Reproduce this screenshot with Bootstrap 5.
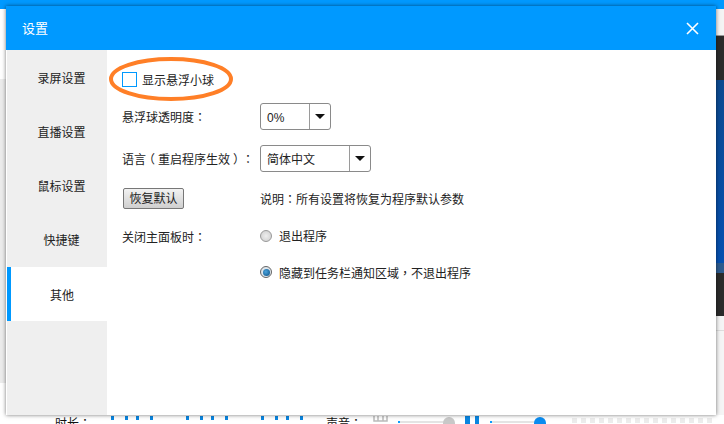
<!DOCTYPE html>
<html lang="zh-Hans">
<head>
<meta charset="utf-8">
<title>设置</title>
<link href="https://cdn.jsdelivr.net/npm/bootstrap@5.3.0/dist/css/bootstrap.min.css" rel="stylesheet">
<style>
html,body{margin:0;width:724px;height:424px;overflow:hidden;background:#fff;}
body{font-family:"Liberation Sans","Noto Sans CJK SC",sans-serif;font-size:12px;color:#222;position:relative;}
.pn{font-family:"Noto Sans CJK TC",sans-serif;font-feature-settings:"locl" 0;}
.pr{font-family:"Noto Sans CJK TC",sans-serif;font-feature-settings:"locl" 0,"halt" 1;margin:0 3px;display:inline-block;}
.bg-top{height:9px;background:#0099ff;}
.bg-side{height:406px;}
.bg-stack{width:8px;height:406px;margin-left:auto;display:flex;flex-direction:column;}
.s-white{height:26px;background:#f4f4f4;}
.s-line{height:1px;background:#999;}
.s-dark{height:44px;background:#2b2b2b;}
.s-blue{height:183px;background:linear-gradient(#0c4a90,#0650b0);}
.s-blue2{height:10px;background:#2d5b8e;}
.s-dark2{height:43px;background:#2b2b2b;}
.s-rest{height:15px;background:#f5f5f5;border-bottom:1px solid #ddd;}
.s-rest2{flex:1;background:#f5f5f5;}
.left-fill{position:absolute;left:0;top:79px;width:6px;height:304px;background:#ececec;}
.dlg{position:absolute;left:6px;top:6px;width:710px;height:409px;background:#fff;box-shadow:0 0 4px rgba(0,0,0,.55);}
.dlg-head{height:44px;background:#0099ff;color:#fff;font-size:13px;padding:2px 17px 0 16px;}
.x-ico{width:13px;height:13px;display:block;margin-top:-2px;}
.dlg-body{height:365px;}
.side{width:100px;background:#efefef;margin-left:1px;padding-top:1px;}
.side-item{height:54px;color:#222;font-size:12px;padding:2px 0 0 9px;}
.side-item.on{background:#fff;border-left:4px solid #0099ff;padding:4px 0 0 6px;}
.main-pane{padding:17px 0 0 15px;}
.rowline{display:flex;align-items:center;}
.lab{width:138px;flex:none;}
.tx{padding-top:2px;}
.chk{width:15px;height:15px;border:1.5px solid #0099ff;background:#fff;margin-right:5px;flex:none;}
.sel{height:27px;border:1px solid #8a8a8a;border-radius:3px;background:#fff;display:flex;align-items:stretch;color:#222;}
.sel-val{padding:2px 0 0 6px;display:flex;align-items:center;border-right:1px solid #9a9a9a;}
.sel-arrow{width:20px;display:flex;align-items:center;justify-content:center;}
.sel-arrow i{display:block;width:0;height:0;border-left:5px solid transparent;border-right:5px solid transparent;border-top:5px solid #111;}
.w50{width:49px;}.w90{width:89px;}
.oldbtn{width:61px;height:21px;padding:2px 0 0;font-size:12px;line-height:17px;color:#222;border:1px solid #777;border-radius:2px;background:linear-gradient(#f2f2f2,#cfcfcf);margin-left:1px;display:block;}
.oldbtn:hover{color:#222;border-color:#777;}
.rad{width:12px;height:12px;border-radius:50%;border:1px solid #999;background:radial-gradient(circle,#eee,#ccc);margin:0 7px 0 0;flex:none;display:flex;align-items:center;justify-content:center;}
.rad.on{background:#dfe6ec;border-color:#666;}
.rad.on i{display:block;width:7px;height:7px;border-radius:50%;background:radial-gradient(circle at 40% 40%,#4aa3dd,#0b4f83);}
.mt-a{margin-top:11px;}.mt-b{margin-top:15px;}.mt-c{margin-top:16px;}.mt-d{margin-top:19px;}.mt-e{margin-top:20px;}
.h25{height:25px;}.h27{height:27px;}.h21{height:21px;}.h16{height:16px;}
.ring{position:absolute;left:105px;top:53px;width:132px;height:52px;pointer-events:none;}
.footbar{position:absolute;left:0;top:413px;width:724px;height:11px;overflow:hidden;}
.tk{position:absolute;top:3px;width:3px;height:4px;background:#0a86e0;}
.foot-t{position:absolute;top:4px;font-size:12px;line-height:12px;color:#111;}
.knob{position:absolute;top:4px;width:12px;height:12px;border-radius:50%;}
.rail{position:absolute;top:8px;height:2px;background:#e4e4e4;border-left:2px solid #0a9cff;}
.k-g{left:443px;background:#c8c8c8;}.k-b{left:534px;background:#0a8cf0;}
.r-a{left:398px;width:46px;}.r-b{left:490px;width:45px;}
.mic{position:absolute;left:372px;top:3px;width:17px;height:8px;}
.bar1{left:465px;width:5px;height:8px;}.bar2{left:475px;width:4px;height:8px;}
.wm{position:absolute;left:572px;top:5px;width:142px;height:5px;background:repeating-linear-gradient(90deg,#ececec 0 5px,#fff 5px 9px);}
</style>
</head>
<body>
<div class="bg-top"></div>
<div class="bg-side">
  <div class="bg-stack">
    <div class="s-white"></div><div class="s-line"></div><div class="s-dark"></div><div class="s-blue"></div><div class="s-blue2"></div><div class="s-dark2"></div><div class="s-rest"></div><div class="s-rest2"></div>
  </div>
</div>
<div class="left-fill"></div>
<div class="footbar">
  <span class="foot-t" style="left:55px">时长<span class="pn" lang="zh-Hant">：</span></span>
  <span class="tk" style="left:111px"></span><span class="tk" style="left:125px"></span><span class="tk" style="left:136px"></span><span class="tk" style="left:150px"></span>
  <span class="tk" style="left:186px"></span><span class="tk" style="left:200px"></span><span class="tk" style="left:211px"></span><span class="tk" style="left:225px"></span>
  <span class="tk" style="left:261px"></span><span class="tk" style="left:275px"></span><span class="tk" style="left:286px"></span><span class="tk" style="left:300px"></span>
  <span class="foot-t" style="left:326px">声音<span class="pn" lang="zh-Hant">：</span></span>
  <svg class="mic" viewBox="0 0 17 8" aria-hidden="true"><path d="M2 0V5H15V0M6 0V5M11 0V5" fill="none" stroke="#bbb" stroke-width="1.5"/></svg>
  <span class="rail r-a"></span><span class="knob k-g"></span>
  <span class="tk bar1"></span><span class="tk bar2"></span>
  <span class="rail r-b"></span><span class="knob k-b"></span>
  <span class="wm"></span>
</div>

<div class="dlg">
  <div class="dlg-head d-flex align-items-center justify-content-between">
    <span>设置</span>
    <svg class="x-ico" viewBox="0 0 13 13" aria-hidden="true"><path d="M1 1 L12 12 M12 1 L1 12" stroke="#fff" stroke-width="1.6" fill="none"/></svg>
  </div>
  <div class="dlg-body d-flex">
    <div class="side d-flex flex-column">
      <div class="side-item d-flex align-items-center justify-content-center">录屏设置</div>
      <div class="side-item d-flex align-items-center justify-content-center">直播设置</div>
      <div class="side-item d-flex align-items-center justify-content-center">鼠标设置</div>
      <div class="side-item d-flex align-items-center justify-content-center">快捷键</div>
      <div class="side-item on d-flex align-items-center justify-content-center">其他</div>
    </div>
    <div class="main-pane flex-grow-1">
      <div class="rowline h25"><span class="chk"></span><span class="tx">显示悬浮小球</span></div>
      <div class="rowline mt-a h27"><span class="lab tx">悬浮球透明度<span class="pn" lang="zh-Hant">：</span></span><div class="sel"><span class="sel-val w50">0%</span><span class="sel-arrow"><i></i></span></div></div>
      <div class="rowline mt-b h27"><span class="lab tx">语言<span class="pr" lang="zh-Hant">（</span>重启程序生效<span class="pr" lang="zh-Hant">）</span><span class="pn" lang="zh-Hant">：</span></span><div class="sel"><span class="sel-val w90">简体中文</span><span class="sel-arrow"><i></i></span></div></div>
      <div class="rowline mt-c h21"><span class="lab"><button type="button" class="btn oldbtn">恢复默认</button></span><span class="tx">说明<span class="pn" lang="zh-Hant">：</span>所有设置将恢复为程序默认参数</span></div>
      <div class="rowline mt-d h16"><span class="lab tx">关闭主面板时<span class="pn" lang="zh-Hant">：</span></span><span class="rad"></span><span class="tx">退出程序</span></div>
      <div class="rowline mt-e h16"><span class="lab"></span><span class="rad on"><i></i></span><span class="tx">隐藏到任务栏通知区域<span class="pn" lang="zh-Hant">，</span>不退出程序</span></div>
    </div>
  </div>
</div>
<svg class="ring" viewBox="0 0 132 52" aria-hidden="true"><ellipse cx="66" cy="26" rx="60" ry="20" fill="none" stroke="#ff7f27" stroke-width="4"/></svg>
</body>
</html>
